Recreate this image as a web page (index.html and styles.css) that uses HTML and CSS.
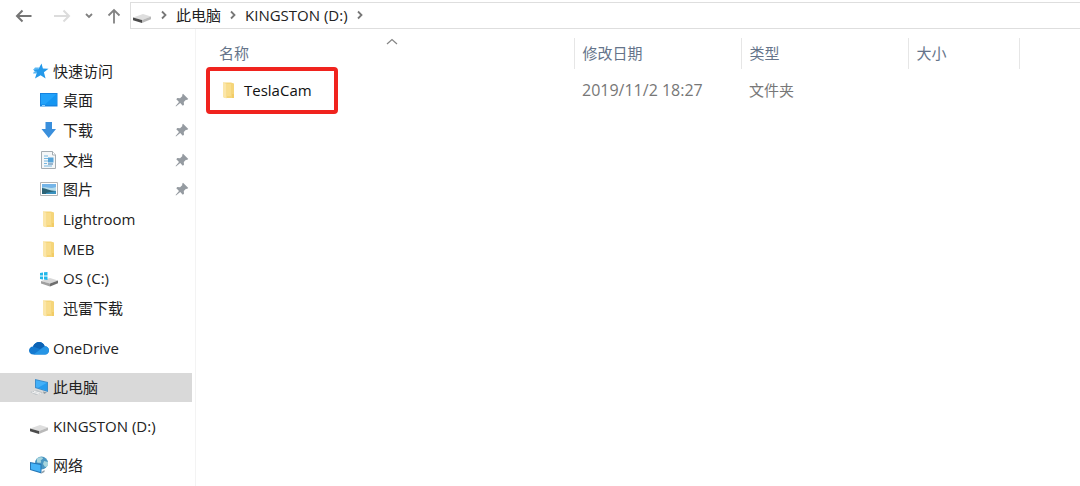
FILE: index.html
```html
<!DOCTYPE html>
<html lang="zh-CN">
<head>
  <meta charset="UTF-8" />
  <meta name="viewport" content="width=device-width, initial-scale=1.0"/>
  <title>KINGSTON (D:)</title>
  <link rel="stylesheet" href="styles.css">
</head>
<body>
  <!-- Shared icons -->
  <svg class="sprite" aria-hidden="true">
    <symbol id="folder" viewBox="0 0 18 18">
      <path d="M3 1.5h8l3 1V17H5.500L3 16z" fill="#f5d579"/>
      <path d="M3 1.500l3.500 1.200V17.500L3 16z" fill="#fbe6a9"/>
      <path d="M6.500 3h4.500v12H6.500z" fill="#f9dd8c"/>
      <path d="M12 13h2v4h-2z" fill="#f2cc66"/>
    </symbol>
    <symbol id="drive" viewBox="0 0 20 18">
      <path d="M1 11.500L11 8l8 2.500-9 3.500z" fill="#dedede"/>
      <path d="M1 11.500l9 2.500v3L1 14.200z" fill="#4c4c4c"/>
      <path d="M10 14l9-3.500v2.800L10 17z" fill="#b9b9b9"/>
    </symbol>
    <symbol id="pin" viewBox="0 0 14 14">
      <path d="M8 .8l5.300 5.300-1.500.8-.8-.2-2.200 2.300.2 2.700-1.200 1L5.200 10 1 13.500.6 13 4 8.900 1.300 6.200l1-1.200 2.800.2L7.400 3l-.3-1z" fill="#959ba1"/>
    </symbol>
    <symbol id="chevron" viewBox="0 0 8 10">
      <path d="M2 1.500L5.500 5 2 8.500" fill="none" stroke="#777" stroke-width="1.800"/>
    </symbol>
  </svg>

  <header class="toolbar">
    <div class="history">
      <button type="button" class="back" aria-label="后退">
        <svg width="18" height="14" viewBox="0 0 18 14"><path d="M16.500 7H2M7.500 1.500L2 7l5.500 5.500" fill="none" stroke="#757575" stroke-width="2"/></svg>
      </button>
      <button type="button" class="forward" aria-label="前进" disabled>
        <svg width="18" height="14" viewBox="0 0 18 14"><path d="M1 7h15M10.500 1.500L16 7l-5.500 5.500" fill="none" stroke="#dcdcdc" stroke-width="2"/></svg>
      </button>
      <button type="button" class="recent" aria-label="最近浏览的位置">
        <svg width="8" height="8" viewBox="0 0 8 8"><path d="M1 2l3 3 3-3" fill="none" stroke="#808080" stroke-width="1.800"/></svg>
      </button>
      <button type="button" class="up" aria-label="向上">
        <svg width="14" height="16" viewBox="0 0 14 16"><path d="M7 15.500V2M1.500 7.500L7 2l5.500 5.500" fill="none" stroke="#838383" stroke-width="1.800"/></svg>
      </button>
    </div>
    <nav class="address" aria-label="地址">
      <svg class="icon"><use href="#drive"/></svg>
      <svg class="chevron"><use href="#chevron"/></svg>
      <a href="#">此电脑</a>
      <svg class="chevron"><use href="#chevron"/></svg>
      <a href="#">KINGSTON (D:)</a>
      <svg class="chevron"><use href="#chevron"/></svg>
    </nav>
  </header>

  <div class="explorer">
    <nav class="sidebar" aria-label="导航窗格">
      <ul class="quick">
        <li><a href="#" class="root">
          <svg class="icon" viewBox="0 0 20 18"><path d="M12.500 1.500l1.400 5 5.600.2-4.600 3.600 1.700 6.200-5-3.300L6 16.500l1.700-5.500L4 7.500l5.600-.8z" fill="#2499ea"/><path d="M6 5.500h4l-.5 2H4.500zM5 9.500h3l-.5 2H4z" fill="#5bb8f3"/></svg>
          <span>快速访问</span></a></li>
        <li><a href="#">
          <svg class="icon" viewBox="0 0 20 18"><path d="M1 2h17.500v13.500H1z" fill="#1583e0"/><path d="M2 3h15.500v10.500H2z" fill="#22a2fa"/><path d="M17.500 3v10.500H6z" fill="#1495f1"/><path d="M3 14.500h3" stroke="#8dd2ff"/></svg>
          <span>桌面</span><svg class="pin"><use href="#pin"/></svg></a></li>
        <li><a href="#">
          <svg class="icon" viewBox="0 0 20 18"><path d="M6.500 1h6.500v7h4L9.700 17 2.500 8h4z" fill="#3a8fdc"/></svg>
          <span>下载</span><svg class="pin"><use href="#pin"/></svg></a></li>
        <li><a href="#">
          <svg class="icon" viewBox="0 0 20 18"><path d="M2.500.5h11L16.500 4v13.500h-14z" fill="#f5f7f8" stroke="#a5adb2"/><path d="M13.500.5V4h3" fill="#fff" stroke="#a5adb2"/><path d="M5 5h4M5 7.500h9M5 10h9M5 12.500h3M5 15h8" stroke="#76b7df"/><path d="M9 6.500h5.500v5H9z" fill="#55a3d8"/><path d="M9 13h5" stroke="#3e75a2"/></svg>
          <span>文档</span><svg class="pin"><use href="#pin"/></svg></a></li>
        <li><a href="#">
          <svg class="icon" viewBox="0 0 20 18"><path d="M1.500 2.500h17v13h-17z" fill="#fff" stroke="#b5b5b5"/><path d="M3 4h14v10H3z" fill="#75b5e8"/><path d="M3 8c4-3 6 2 14-1v4H3z" fill="#b7dcea"/><path d="M3 8c4 0 7 3 14 3v3H3z" fill="#2d6477"/><path d="M7 13l10-2v3H7z" fill="#3b92bf"/></svg>
          <span>图片</span><svg class="pin"><use href="#pin"/></svg></a></li>
        <li><a href="#"><svg class="icon"><use href="#folder"/></svg><span>Lightroom</span></a></li>
        <li><a href="#"><svg class="icon"><use href="#folder"/></svg><span>MEB</span></a></li>
        <li><a href="#">
          <svg class="icon" viewBox="0 0 20 18"><path d="M2 12l9-3 8 2.500-8 3z" fill="#d8d8d8"/><path d="M2 12l9 2.500v3L2 14.500z" fill="#a0a0a0"/><path d="M11 14.500l8-3v2.700l-8 3.300z" fill="#6e6e6e"/><path d="M1 4l3-.5v3H1zM5 3.300L8.500 3v3.500H5zM1 7.500h3v3L1 10zM5 7.500h3.500V11L5 10.600z" fill="#22b8ea"/></svg>
          <span>OS (C:)</span></a></li>
        <li><a href="#"><svg class="icon"><use href="#folder"/></svg><span>迅雷下载</span></a></li>
      </ul>

      <ul class="places">
        <li><a href="#" class="root">
          <svg class="icon" viewBox="0 0 20 18"><path d="M4.500 15.500C1.500 15.500 0 13.500 0 11.500c0-2.300 1.800-4 4-4C5.200 4.500 7.500 3 10 3c2.800 0 5 1.800 5.700 4.200C18.200 7.200 20 9 20 11.500c0 2.300-1.700 4-4 4z" fill="#1479cf"/><path d="M4 7.500C5.200 4.500 7.500 3 10 3c2.800 0 5 1.800 5.700 4.200L11 10z" fill="#0c63b5"/><path d="M4.500 15.500L15.700 7.200C18.200 7.200 20 9 20 11.500c0 2.300-1.700 4-4 4z" fill="#2695e5"/></svg>
          <span>OneDrive</span></a></li>
        <li><a href="#" class="root selected" aria-current="page">
          <svg class="icon" viewBox="0 0 20 18"><path d="M6 1l13 3v10L6 10z" fill="#3c8dcb"/><path d="M7 2.300l11 2.500v7.800L7 9.200z" fill="#43b0f8"/><path d="M18 4.800v7.800L9 9.800z" fill="#269bee"/><path d="M1 14l7-2 6 2.500-7 2.500z" fill="#bfc5c9"/><path d="M3 14l7 2M5 13.300l7 2" stroke="#f3f3f3"/><path d="M14 13.500l4 1-3 1.500" fill="#8e989f"/></svg>
          <span>此电脑</span></a></li>
        <li><a href="#" class="root"><svg class="icon"><use href="#drive"/></svg><span>KINGSTON (D:)</span></a></li>
        <li><a href="#" class="root">
          <svg class="icon" viewBox="0 0 20 18"><circle cx="12.500" cy="7" r="6.500" fill="#4a96c2"/><path d="M8 2.500c3-2 6-1 6 0s-3 1-2 3-3 1-4 1zM15 5l4 1v4l-3 1-2-3z" fill="#a8d5dd"/><path d="M1 6l11.500 2v9.500L1 14z" fill="#2576b5"/><path d="M2 7.200L11.500 9v7L2 13.300z" fill="#45b3f7"/><path d="M12.500 16l3-2v2l-3 1.500z" fill="#8b9aa4"/></svg>
          <span>网络</span></a></li>
      </ul>
    </nav>

    <main class="content">
      <table class="files">
        <thead>
          <tr>
            <th class="col-name" scope="col" aria-sort="ascending">名称
              <svg class="sort" viewBox="0 0 12 7"><path d="M1 6l5-4.500L11 6" fill="none" stroke="#858585" stroke-width="1.200"/></svg>
            </th>
            <th class="col-date" scope="col">修改日期</th>
            <th class="col-type" scope="col">类型</th>
            <th class="col-size" scope="col">大小</th>
            <td></td>
          </tr>
        </thead>
        <tbody>
          <tr>
            <td class="name-cell">
              <a href="#"><svg class="icon"><use href="#folder"/></svg>TeslaCam</a>
              <span class="highlight"></span>
            </td>
            <td class="date-cell">2019/11/2 18:27</td>
            <td>文件夹</td>
            <td></td>
            <td></td>
          </tr>
        </tbody>
      </table>
    </main>
  </div>
</body>
</html>
```
FILE: styles.css
```css
* {
  box-sizing: border-box;
}

body {
  margin: 0;
  min-height: 100vh;
  display: flex;
  flex-direction: column;
  background: #fff;
  color: #222;
  font-family: "Open Sans", "Noto Sans CJK SC", sans-serif;
  font-size: 15px;
  line-height: 20px;
}

a {
  color: inherit;
  text-decoration: none;
}

ul {
  list-style: none;
  margin: 0;
  padding: 0;
}

.sprite {
  position: absolute;
  width: 0;
  height: 0;
}

.icon {
  flex: none;
  width: 20px;
  height: 18px;
}

/* Toolbar */
.toolbar {
  display: flex;
  padding-top: 2px;
}

.history {
  flex: none;
  width: 130px;
  display: flex;
  align-items: center;
  gap: 14px;
  padding-left: 15px;
}

.history button {
  display: flex;
  margin: 0;
  padding: 0;
  border: none;
  background: none;
}

.history .back {
  padding-right: 6px;
}

.address {
  flex: 1;
  display: flex;
  align-items: center;
  height: 27px;
  padding: 0 0 2px 1px;
  border: 1px solid #dedede;
  border-right: none;
}

.address .chevron {
  margin: 0 8px;
}

.chevron {
  flex: none;
  width: 8px;
  height: 10px;
}

/* Panes */
.explorer {
  flex: 1;
  display: flex;
}

.sidebar {
  flex: none;
  width: 196px;
  padding: 28px 3px 0 0;
  border-right: 1px solid #f3f3f3;
}

.quick {
  display: grid;
  grid-auto-rows: 1fr;
  min-height: 267px;
  margin-bottom: 10px;
}

.places {
  display: grid;
  grid-auto-rows: 29px;
  gap: 10px;
}

.sidebar a {
  display: flex;
  align-items: center;
  gap: 4px;
  height: 100%;
  padding: 0 3px 2px 39px;
}

.sidebar a.root {
  padding-left: 29px;
}

.sidebar a.selected {
  background: #d9d9d9;
}

.pin {
  width: 14px;
  height: 14px;
  margin-left: auto;
}

/* File list */
.content {
  flex: 1;
  padding: 9px 0 0 15px;
}

.files {
  width: 100%;
  table-layout: fixed;
  border-collapse: collapse;
}

.files th,
.files td {
  padding: 0 8px 2px;
  text-align: left;
}

.files th {
  position: relative;
  height: 31px;
  border-right: 1px solid #e6e6e6;
  color: #65748a;
  font-weight: normal;
}

.files tbody td {
  height: 44px;
  color: #777;
}

.files .date-cell {
  font-size: 16px;
}

.col-name {
  width: 363px;
}

.col-date,
.col-type {
  width: 167px;
}

.col-size {
  width: 111px;
}

.sort {
  position: absolute;
  top: 0;
  left: 50%;
  width: 12px;
  height: 7px;
  margin-left: -6px;
}

.files .name-cell {
  position: relative;
  color: #111;
}

.name-cell a {
  display: flex;
  align-items: center;
  gap: 5px;
}

.highlight {
  position: absolute;
  top: -2px;
  left: -5px;
  width: 132px;
  height: 47px;
  border: 4px solid #f0231e;
  border-radius: 4px;
  pointer-events: none;
}
```
